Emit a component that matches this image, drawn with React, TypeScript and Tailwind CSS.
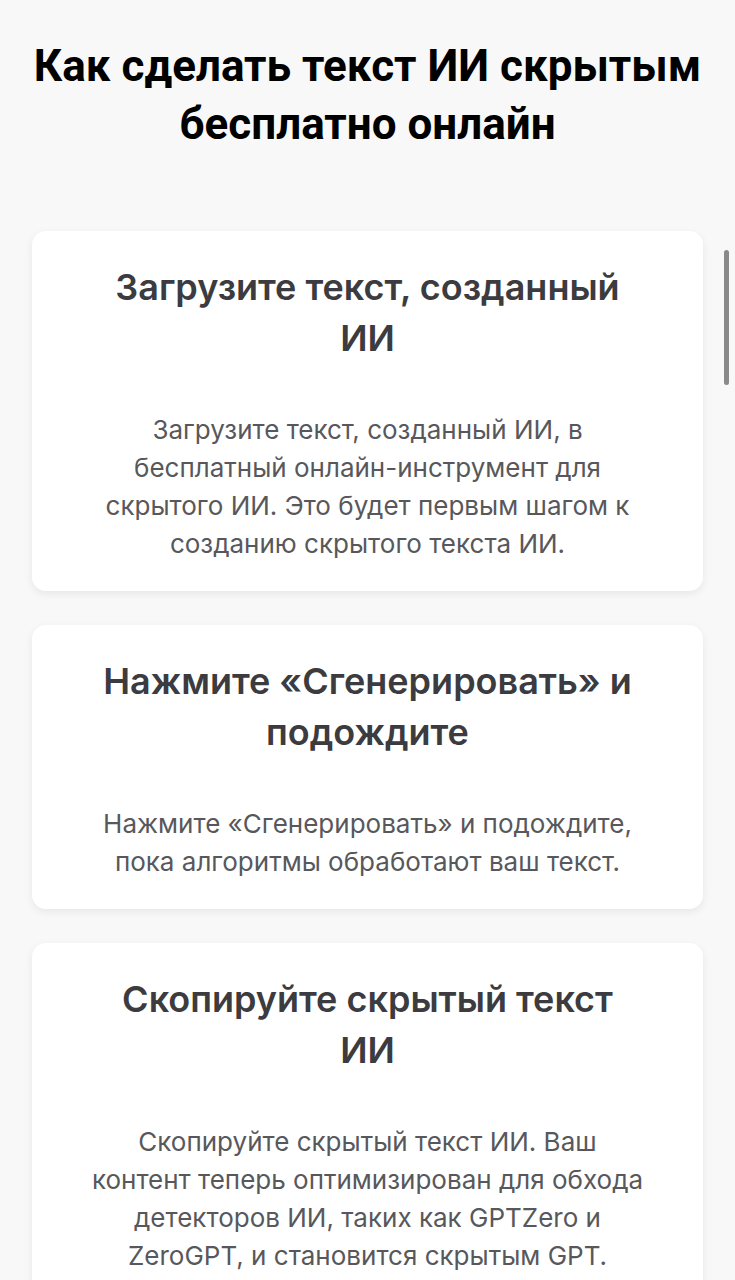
import React from "react";

const cards = [
  {
    title: ["Загрузите текст, созданный", "ИИ"],
    body: [
      "Загрузите текст, созданный ИИ, в",
      "бесплатный онлайн-инструмент для",
      "скрытого ИИ. Это будет первым шагом к",
      "созданию скрытого текста ИИ.",
    ],
  },
  {
    title: ["Нажмите «Сгенерировать» и", "подождите"],
    body: ["Нажмите «Сгенерировать» и подождите,", "пока алгоритмы обработают ваш текст."],
  },
  {
    title: ["Скопируйте скрытый текст", "ИИ"],
    body: [
      "Скопируйте скрытый текст ИИ. Ваш",
      "контент теперь оптимизирован для обхода",
      "детекторов ИИ, таких как GPTZero и",
      "ZeroGPT, и становится скрытым GPT.",
    ],
  },
];

export default function App() {
  return (
    <div className="relative min-h-[1280px] bg-[#f8f8f8] overflow-hidden">
      <h1
        className="pt-[37px] px-[10px] text-center text-[44px] leading-[58px] font-bold text-black"
        style={{ fontFamily: "Roboto, 'Noto Sans', sans-serif" }}
      >
        Как сделать текст ИИ скрытым
        <br />
        бесплатно онлайн
      </h1>
      <div className="mt-[78px] flex flex-col gap-[34px] px-[32px]">
        {cards.map((c, i) => (
          <div
            key={i}
            className="bg-white rounded-[14px] shadow-[0_3px_8px_rgba(0,0,0,0.07)] px-[20px] pt-[31px] pb-[28px] flex flex-col items-center gap-[47px] text-center"
            style={{ fontFamily: "Inter, 'Noto Sans', sans-serif" }}
          >
            <h2 className="text-[36px] leading-[51px] font-semibold text-[#3b3b40] whitespace-nowrap">
              {c.title.map((l, j) => (
                <span key={j} className="block">
                  {l}
                </span>
              ))}
            </h2>
            <p className="text-[26px] leading-[38px] text-[#58585c] whitespace-nowrap">
              {c.body.map((l, j) => (
                <span key={j} className="block">
                  {l}
                </span>
              ))}
            </p>
          </div>
        ))}
      </div>
      <div className="absolute left-[724px] top-[250px] w-[5px] h-[135px] rounded-full bg-[#8a8a8a]" />
    </div>
  );
}
